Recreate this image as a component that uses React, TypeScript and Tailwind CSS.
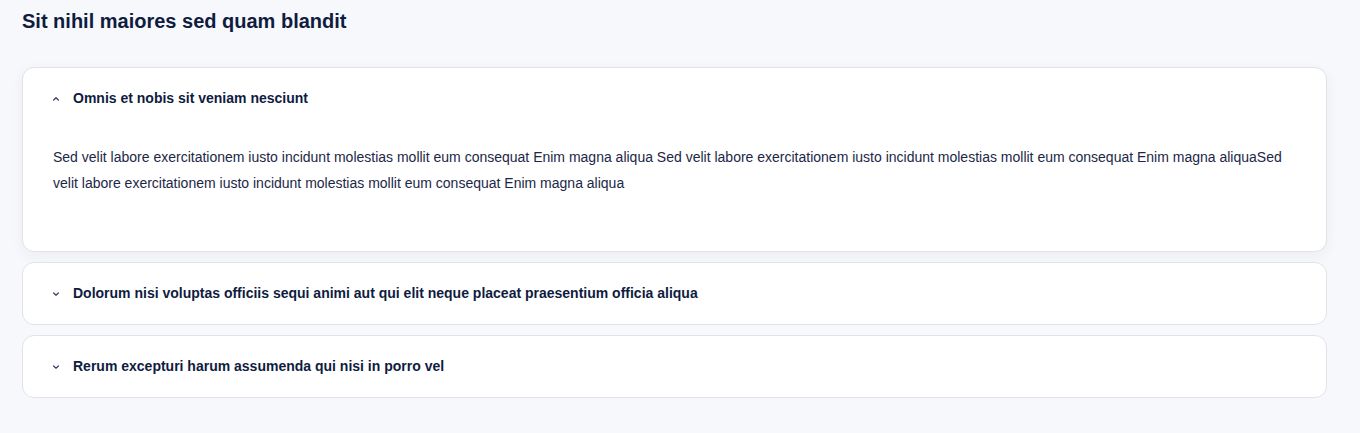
import React from "react";

const Chevron = ({ up }: { up?: boolean }) => (
  <svg width="8" height="6" viewBox="0 0 8 6" className="shrink-0" style={{ transform: up ? "rotate(180deg)" : undefined }}>
    <path d="M1.6 2 L4 4.2 L6.4 2" fill="none" stroke="#34405f" strokeWidth="1.2" strokeLinecap="round" strokeLinejoin="round" />
  </svg>
);

const body =
  "Sed velit labore exercitationem iusto incidunt molestias mollit eum consequat Enim magna aliqua Sed velit labore exercitationem iusto incidunt molestias mollit eum consequat Enim magna aliquaSed velit labore exercitationem iusto incidunt molestias mollit eum consequat Enim magna aliqua";

export default function App() {
  return (
    <div
      className="min-h-[433px] w-full bg-[#f7f8fb] pl-[22px] pr-[33px] pt-[9px] pb-[36px] text-[#0f1c3f]"
      style={{ fontFamily: '"Liberation Sans", Arial, sans-serif' }}
    >
      <h1 className="text-[20px] font-bold leading-[24px] text-[#0f1c3f]">Sit nihil maiores sed quam blandit</h1>
      <div className="mt-[34px] flex flex-col gap-[10px]">
        <div className="rounded-[12px] border border-[#e1e3e8] bg-white shadow-[0_4px_14px_rgba(20,30,60,0.05)]">
          <div className="flex h-[61px] items-center gap-[13px] pl-[29px]">
            <Chevron up />
            <span className="text-[14px] font-bold text-[#0f1c3f]">Omnis et nobis sit veniam nesciunt</span>
          </div>
          <div className="px-[30px] pr-[40px] pt-[15px] pb-[55px] text-[14px] leading-[26px] text-[#1c2747]">{body}</div>
        </div>
        <div className="rounded-[12px] border border-[#e1e3e8] bg-white">
          <div className="flex h-[61px] items-center gap-[13px] pl-[29px]">
            <Chevron />
            <span className="text-[14px] font-bold text-[#0f1c3f]">
              Dolorum nisi voluptas officiis sequi animi aut qui elit neque placeat praesentium officia aliqua
            </span>
          </div>
        </div>
        <div className="rounded-[12px] border border-[#e1e3e8] bg-white">
          <div className="flex h-[61px] items-center gap-[13px] pl-[29px]">
            <Chevron />
            <span className="text-[14px] font-bold text-[#0f1c3f]">Rerum excepturi harum assumenda qui nisi in porro vel</span>
          </div>
        </div>
      </div>
    </div>
  );
}
